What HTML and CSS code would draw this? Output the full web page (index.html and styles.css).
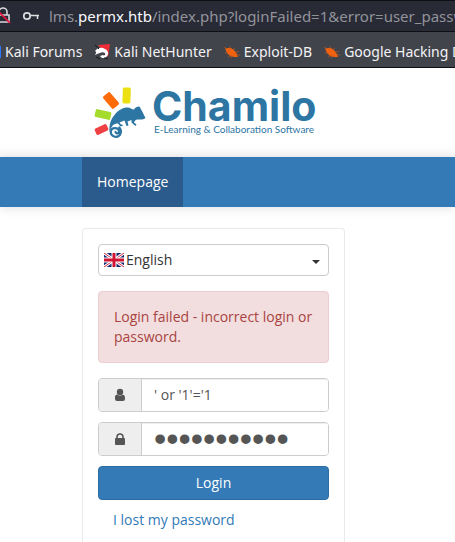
FILE: index.html
```html
<!DOCTYPE html>
<html lang="en">
<head>
<meta charset="utf-8">
<meta name="viewport" content="width=device-width, initial-scale=1">
<title>Chamilo</title>
<link rel="stylesheet" href="styles.css">
</head>
<body>
<svg width="0" height="0" class="symbols" aria-hidden="true">
  <symbol id="bug" viewBox="0 0 16 16">
    <path d="M1 4.500 4 4l3 0 3 2 3 4 1 3-4 0-4-1-3-3z" fill="#f0620f"/>
    <path d="M0 3l3 2M1 9l3 0M4 13l3-2M6 2l0 3M9 6l2-2M11 8l4-.5M12 10.500l4 .5M8 11l-1 3" stroke="#bd571f" stroke-width=".7" fill="none"/>
  </symbol>
</svg>
<div class="address">
  <svg class="insecure" viewBox="0 0 20 20" aria-hidden="true">
    <path d="M7 9V6a4 4 0 0 1 8 0v3M5 9h12v7H5z" fill="none" stroke="#d8d8dc" stroke-width="1.600"/>
    <path d="M3 2l15 15" stroke="#e8143c" stroke-width="1.700"/>
  </svg>
  <svg class="key" viewBox="0 0 16 10" aria-hidden="true">
    <circle cx="4" cy="5" r="3.200" fill="none" stroke="#dedee2" stroke-width="1.700"/>
    <path d="M7.500 4.500H16M14.500 4.500v3.500" stroke="#dedee2" stroke-width="1.500" fill="none"/>
  </svg>
  <span class="url">lms.<b>permx.htb</b>/index.php?loginFailed=1&amp;error=user_passwo</span>
</div>
<nav class="bookmarks" aria-label="Bookmarks">
  <a href="#"><span class="forum-mark"></span>Kali Forums</a>
  <a href="#"><svg viewBox="0 0 16 16" aria-hidden="true"><path d="M4 1l12-1-2 13z" fill="#f22c36"/><path d="M1 7C4 3 8 3 11 5c4 2 4 6 1 8-2 2-5 1-6-1l3-1c1 1 3 0 2-2-2-2-6 0-10 2 1-2 2-3 0-4z" fill="#fff"/><path d="M1 1l4 4M2 13l4 2M10 14l4 1" stroke="#171719"/></svg>Kali NetHunter</a>
  <a href="#"><svg viewBox="0 0 16 16" aria-hidden="true"><use href="#bug"/></svg>Exploit-DB</a>
  <a href="#"><svg viewBox="0 0 16 16" aria-hidden="true"><use href="#bug"/></svg>Google Hacking D</a>
</nav>
<header class="site-header">
  <a class="logo" href="#">
    <svg class="chameleon" viewBox="0 0 54 54" aria-hidden="true">
      <rect x="-4" y="-8" width="8" height="16" rx="1.500" fill="#ecdf12" transform="translate(32.600 9.500) rotate(2)"/>
      <rect x="-4.500" y="-8" width="9" height="16" rx="1.500" fill="#ff6b08" transform="translate(17 14.500) rotate(-40)"/>
      <rect x="-4" y="-8" width="8" height="16" rx="1.500" fill="#a5db2d" transform="translate(9 28.500) rotate(-77)"/>
      <rect x="-3.500" y="-6.500" width="7" height="13" rx="1.500" fill="#ef4043" transform="translate(7.500 43.500) rotate(64)"/>
      <path d="M15.500 46C15 38 17 33 20.500 29 24 24 29 21.500 33.500 21.500c3 0 4 2 6.500 2 1-2 3.500-3.200 5.500-3l3 5.500 3 6c-2 2-5 1.500-8 1.500-2 0-3 1.500-3.500 3l2.500 2-1 1.500-4-3.500 0-2.500-4 1.500 1 4-2 .5-2-5.500-5 2 1 1.500 3 1.500-3 1-2.500-3c-4 0-6 2-7.500 6z" fill="#2d75a3"/>
      <path d="M21.500 46c1 2.500 4 1 3.500-1-.5-4-8-4-8.200.5-.2 5 6 7 9 3.500 1.500-2 1.500-5-.5-7.500" fill="none" stroke="#2d75a3" stroke-width="2.200" stroke-linecap="round"/>
    </svg>
    <span class="brand"><span class="name">Chamilo</span><span class="tagline">E-Learning &amp; Collaboration Software</span></span>
  </a>
</header>
<nav class="menu" aria-label="Main"><a href="#">Homepage</a></nav>
<main>
  <form class="panel">
    <div class="language">
      <svg viewBox="0 0 20 14" aria-hidden="true">
        <path fill="#142b6f" d="M0 0h20v14H0z"/>
        <path d="M0 0l20 14M20 0L0 14" stroke="#fff" stroke-width="3"/>
        <path d="M0 0l20 14M20 0L0 14" stroke="#d22b49" stroke-width="1"/>
        <path d="M10 0v14M0 7h20" stroke="#fff" stroke-width="5"/>
        <path d="M10 0v14M0 7h20" stroke="#cf1434" stroke-width="3"/>
      </svg>
      <select aria-label="Language"><option>English</option></select>
    </div>
    <div class="alert" role="alert">Login failed - incorrect login or password.</div>
    <div class="field">
      <label for="login" aria-label="Username"><svg viewBox="0 0 14 14" aria-hidden="true"><circle cx="7" cy="4" r="3.200"/><path d="M2 9c0-2 2-3 3-2q2 1 4 0c2-1 3 1 3 3v1q0 2-2 2H4q-2 0-2-2z"/></svg></label>
      <input id="login" type="text" value="' or '1'='1">
    </div>
    <div class="field">
      <label for="password" aria-label="Password"><svg viewBox="0 0 14 14" aria-hidden="true"><path d="M4 7V5a3 3 0 0 1 6 0v2" fill="none" stroke="#555" stroke-width="1.600"/><rect x="2" y="6" width="10" height="7" rx="1"/></svg></label>
      <input id="password" type="password" value="' or '1'='1">
    </div>
    <button type="submit">Login</button>
    <a class="lost" href="#">I lost my password</a>
  </form>
</main>
</body>
</html>
```
FILE: styles.css
```css
* { box-sizing: border-box; }
body {
  margin: 0;
  min-height: 100vh;
  display: flex;
  flex-direction: column;
  overflow-x: hidden;
  background: #fff;
  color: #333;
  font: 14px/20px "Open Sans", sans-serif;
}
a { text-decoration: none; }
.symbols { display: none; }
.address {
  display: flex;
  align-items: center;
  height: 32px;
  overflow: hidden;
  border-top: 1px solid #0e0f14;
  border-bottom: 1px solid #0e0f14;
  background: #282a36;
  color: #92939a;
  font: 15px/24px "Noto Sans", sans-serif;
  white-space: nowrap;
}
.address svg { flex: none; }
.insecure { width: 20px; height: 20px; margin-left: -8px; }
.key { width: 16px; height: 10px; margin: 0 10px 0 11px; }
.url { flex: 1; min-width: 0; overflow: hidden; }
.url b { color: #fbfbfe; font-weight: 400; }
.bookmarks {
  display: flex;
  align-items: center;
  gap: 12px;
  height: 36px;
  padding-top: 4px;
  overflow: hidden;
  border-bottom: 1px solid #0e0f14;
  background: #42444c;
  font: 14px/20px "Noto Sans", sans-serif;
  white-space: nowrap;
}
.bookmarks a { display: flex; align-items: center; gap: 4px; flex: none; color: #f3f3f5; }
.bookmarks a:last-child { flex: 1; min-width: 0; overflow: hidden; }
.bookmarks svg { flex: none; width: 16px; height: 16px; }
.forum-mark { width: 1px; height: 12px; background: #2777ff; }
.site-header {
  height: 89px;
  padding: 18px 20px 0 94px;
  background: linear-gradient(#fff 85%, #f8f8f8);
}
.logo { display: inline-flex; gap: 4px; color: #2d75a3; }
.chameleon { width: 54px; height: 54px; }
.brand { display: flex; flex-direction: column; white-space: nowrap; }
.name { padding-top: 2px; font: 700 41px/36px Inter, sans-serif; }
.tagline { padding: 0 2px; font: 10px/10px Lato, sans-serif; }
.menu {
  position: relative;
  display: flex;
  height: 50px;
  padding-left: 82px;
  background: #337ab7;
  box-shadow: 0 1px 10px rgba(0, 0, 0, .12);
}
.menu a { padding: 15px; background: #2b5b8c; color: #fff; }
main { flex: 1; display: flex; padding: 21px 110px 0 82px; }
.panel {
  flex: 1;
  min-width: 0;
  display: flex;
  flex-direction: column;
  padding: 15px 15px 0;
  border: 1px solid #eaeaea;
  border-bottom: 0;
  border-radius: 4px 4px 0 0;
}
.language {
  display: flex;
  align-items: center;
  position: relative;
  height: 32px;
  margin-bottom: 15px;
  border: 1px solid #ccc;
  border-radius: 4px;
}
.language svg { position: absolute; left: 5px; width: 20px; height: 14px; pointer-events: none; }
.language::after {
  content: "";
  position: absolute;
  right: 8px;
  top: 15px;
  border: 4px solid transparent;
  border-top-color: #333;
  border-bottom: 0;
  pointer-events: none;
}
select {
  width: 100%;
  height: 30px;
  padding: 0 27px;
  border: 0;
  background: transparent;
  color: #333;
  font: inherit;
  appearance: none;
}
.alert {
  padding: 15px;
  margin-bottom: 15px;
  border: 1px solid #ebccd1;
  border-radius: 4px;
  background: #f2dede;
  color: #a94442;
}
.field {
  display: flex;
  height: 34px;
  margin-bottom: 10px;
  border: 1px solid #ccc;
  border-radius: 4px;
  overflow: hidden;
}
.field label {
  display: flex;
  align-items: center;
  justify-content: center;
  flex: none;
  width: 43px;
  border-right: 1px solid #ccc;
  background: #eee;
}
.field svg { width: 14px; height: 14px; fill: #555; }
.field input {
  flex: 1;
  min-width: 0;
  padding: 0 12px;
  border: 0;
  outline: 0;
  box-shadow: inset 0 1px 1px rgba(0, 0, 0, .075);
  color: #555;
  font: inherit;
}
.field input[type="password"] { font: 35px/32px "Liberation Sans", sans-serif; }
button {
  height: 34px;
  border: 1px solid #2e6da4;
  border-radius: 4px;
  background: #337ab7;
  color: #fff;
  font: inherit;
}
.lost { align-self: flex-start; padding: 10px 15px; color: #337ab7; }
```
